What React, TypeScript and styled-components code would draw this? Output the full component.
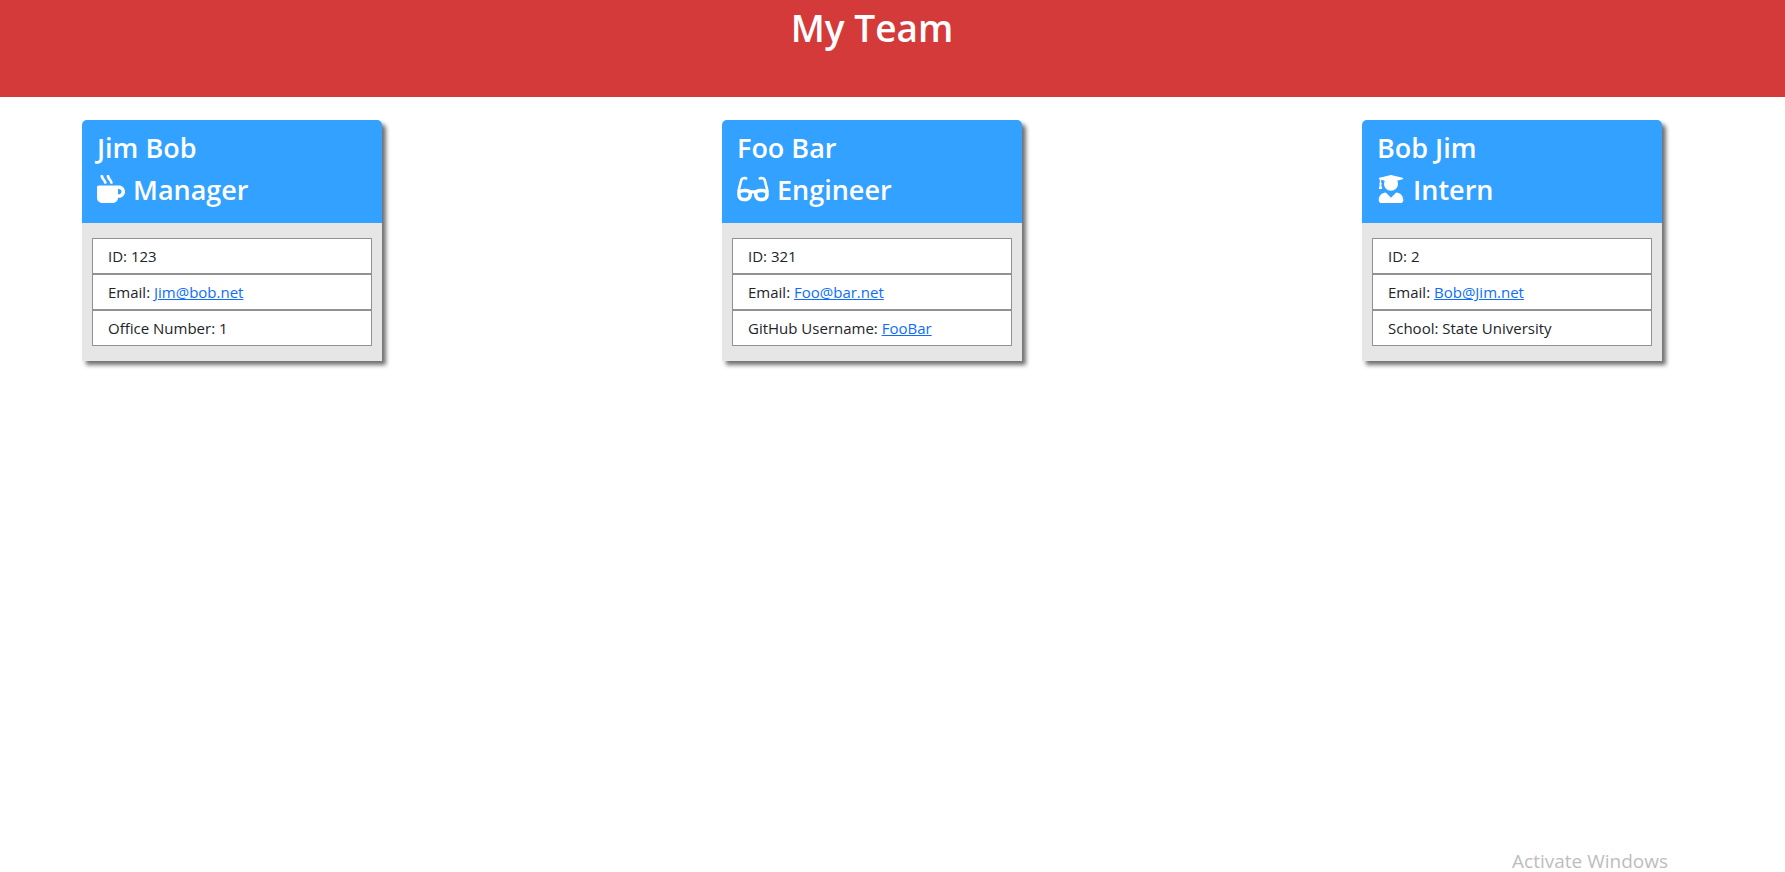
import React from "react";
import styled, { createGlobalStyle } from "styled-components";
import { FaGlasses, FaMugHot, FaUserGraduate } from "react-icons/fa";
import type { IconType } from "react-icons";

const GlobalStyle = createGlobalStyle`
  *, *::before, *::after { box-sizing: border-box; }
  body {
    margin: 0;
    background: #fff;
    color: #212529;
    font-family: "Segoe UI", "Open Sans", "Noto Sans", sans-serif;
    font-size: 15px;
    line-height: 24px;
  }
`;

const Page = styled.div`
  min-height: 100vh;
  display: flex;
  flex-direction: column;
`;

const Banner = styled.header`
  padding: 4px 41px 45px 0;
  background: #d43a3a;
  color: #fff;
  text-align: center;
`;

const Title = styled.h1`
  margin: 0;
  font-size: 37px;
  font-weight: 600;
  line-height: 48px;
`;

const Team = styled.main`
  flex: 1;
  display: flex;
  flex-wrap: wrap;
  justify-content: space-between;
  align-items: flex-start;
  gap: 24px;
  padding: 23px 123px 24px 82px;
`;

const Card = styled.article`
  width: 300px;
  background: #e6e6e6;
  border-radius: 5px 5px 0 0;
  box-shadow: 4px 4px 4px #707070;
`;

const CardHeader = styled.div`
  display: flex;
  flex-direction: column;
  gap: 8px;
  padding: 11px 15px 16px;
  background: #33a1ff;
  border-radius: 5px 5px 0 0;
  color: #fff;
`;

const Heading = styled.h2<{ $iconWidth?: number }>`
  display: flex;
  align-items: center;
  gap: 8px;
  margin: 0;
  font-size: 27px;
  font-weight: 600;
  line-height: 34px;

  svg {
    flex: none;
    width: ${({ $iconWidth = 28 }) => $iconWidth}px;
    height: 28px;
    margin-bottom: 2px;
  }
`;

const Facts = styled.ul`
  margin: 0;
  padding: 15px 10px;
  list-style: none;
`;

const Fact = styled.li`
  padding: 5px 15px;
  background: #fff;
  border: 1px solid #919191;
`;

const Link = styled.a`
  color: #0d6efd;
  text-decoration: underline;
`;

const Watermark = styled.footer`
  padding: 0 117px 0 0;
  color: #bdbdbd;
  font-size: 19px;
  line-height: 22px;
  text-align: right;
`;

type Member = {
  name: string;
  role: string;
  icon: IconType;
  iconWidth?: number;
  facts: { label: string; value: string; href?: string }[];
};

const members: Member[] = [
  {
    name: "Jim Bob",
    role: "Manager",
    icon: FaMugHot,
    facts: [
      { label: "ID", value: "123" },
      { label: "Email", value: "Jim@bob.net", href: "mailto:Jim@bob.net" },
      { label: "Office Number", value: "1" },
    ],
  },
  {
    name: "Foo Bar",
    role: "Engineer",
    icon: FaGlasses,
    iconWidth: 32,
    facts: [
      { label: "ID", value: "321" },
      { label: "Email", value: "Foo@bar.net", href: "mailto:Foo@bar.net" },
      { label: "GitHub Username", value: "FooBar", href: "https://github.com/FooBar" },
    ],
  },
  {
    name: "Bob Jim",
    role: "Intern",
    icon: FaUserGraduate,
    facts: [
      { label: "ID", value: "2" },
      { label: "Email", value: "Bob@Jim.net", href: "mailto:Bob@Jim.net" },
      { label: "School", value: "State University" },
    ],
  },
];

function MemberCard({ name, role, icon: Icon, iconWidth, facts }: Member) {
  return (
    <Card>
      <CardHeader>
        <Heading>{name}</Heading>
        <Heading $iconWidth={iconWidth}>
          <Icon aria-hidden />
          {role}
        </Heading>
      </CardHeader>
      <Facts>
        {facts.map(({ label, value, href }) => (
          <Fact key={label}>
            {label}: {href ? <Link href={href}>{value}</Link> : value}
          </Fact>
        ))}
      </Facts>
    </Card>
  );
}

export default function App() {
  return (
    <>
      <GlobalStyle />
      <Page>
        <Banner>
          <Title>My Team</Title>
        </Banner>
        <Team>
          {members.map((member) => (
            <MemberCard key={member.name} {...member} />
          ))}
        </Team>
        <Watermark>Activate Windows</Watermark>
      </Page>
    </>
  );
}
